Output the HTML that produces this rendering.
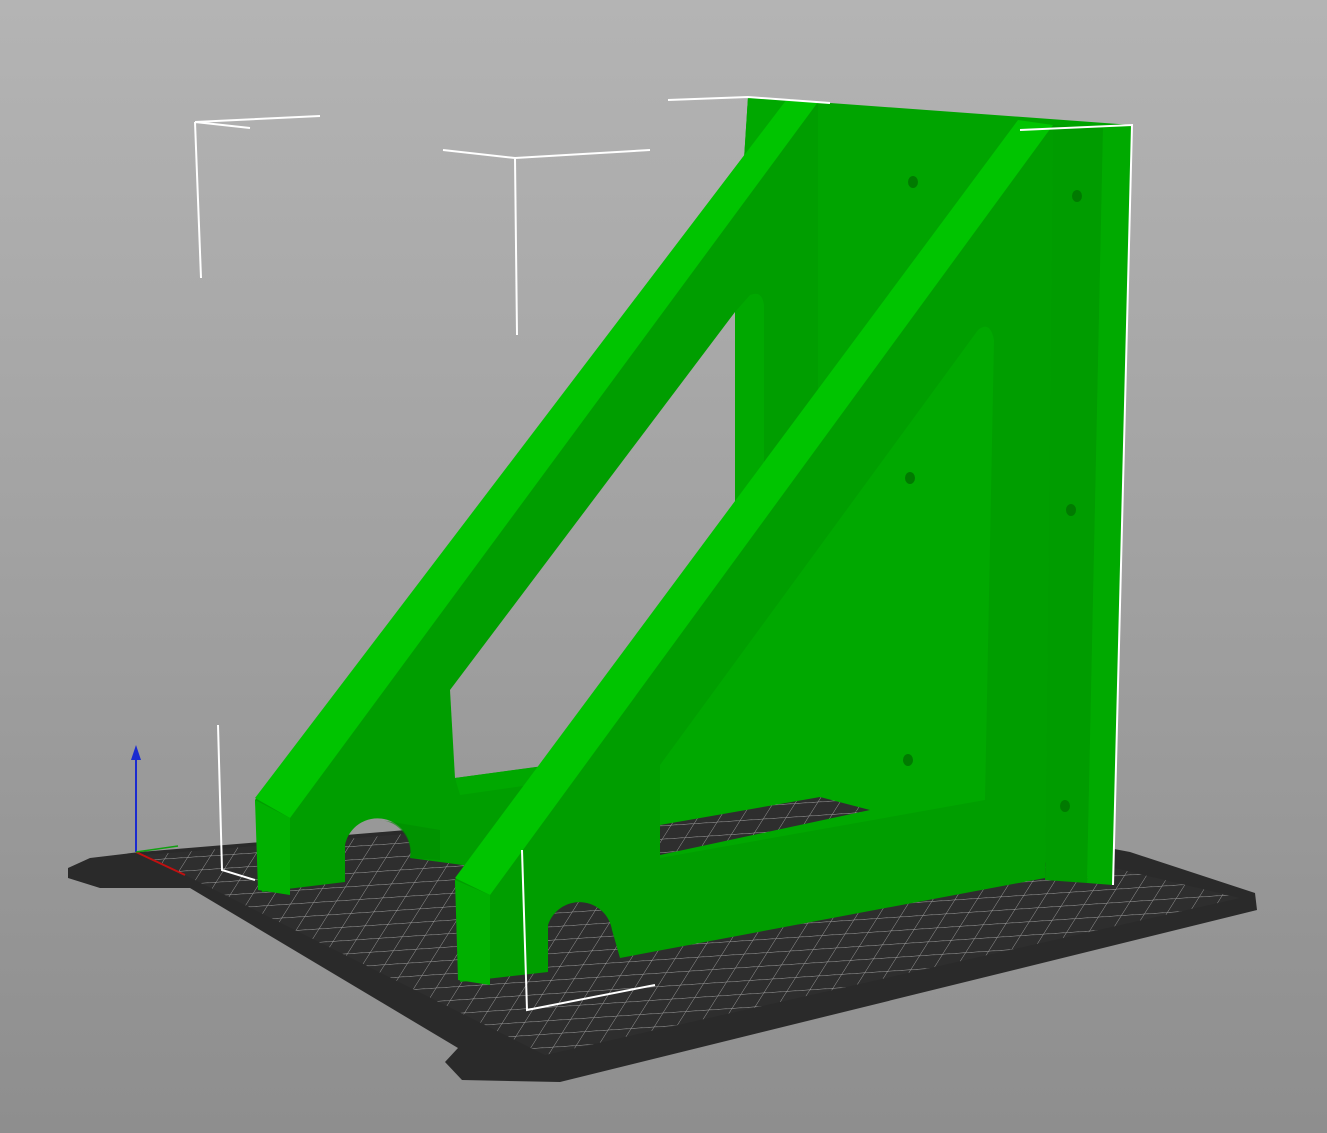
<!DOCTYPE html>
<html><head><style>html,body{margin:0;padding:0;width:1327px;height:1133px;overflow:hidden}</style></head><body>
<svg width="1327" height="1133" viewBox="0 0 1327 1133" xmlns="http://www.w3.org/2000/svg">
<defs><linearGradient id="bg" x1="0" y1="0" x2="0" y2="1133" gradientUnits="userSpaceOnUse"><stop offset="0" stop-color="#b4b4b4"/><stop offset="1" stop-color="#8e8e8e"/></linearGradient>
<pattern id="grid" width="22" height="14" patternUnits="userSpaceOnUse" patternTransform="skewX(-35) rotate(-4)"><rect width="22" height="14" fill="#2e2e2e"/><path d="M0 0H22M0 0V14" stroke="#a0a0a0" stroke-width="1"/></pattern></defs>
<rect width="1327" height="1133" fill="url(#bg)"/>
<!-- bed -->
<path d="M68,868 L90,858 L140,852 L830,795 L1130,852 L1255,893 L1257,910 L560,1082 L462,1080 L445,1062 L458,1048 L190,888 L100,888 L68,878 Z" fill="#2a2a2a"/>
<path d="M145,855 L830,800 L1240,898 L545,1055 Z" fill="url(#grid)"/>
<!-- plate -->
<path d="M748,97 L1132,125 L1113,885 L735,760 L735,300 Z" fill="#00a400"/>
<path d="M748,97 L818,102 L818,560 L735,740 L735,300 Z" fill="#00a800"/>
<path d="M1053,125 L1103,128 L1087,883 L1045,880 Z" fill="#009c00"/>
<path d="M1103,128 L1132,125 L1113,885 L1087,883 Z" fill="#00aa00"/>
<!-- left arm -->
<path d="M255,800 L787,99 L818,102 L818,748 L818,800 L470,866 L440,862 L410,858 A33,33 0 0 0 345,845 L345,882 L262,892 Z" fill="#009e00"/>
<path d="M450,690 L735,312 L735,740 L455,778 Z" fill="url(#bg)"/>
<path d="M735,312 L750,295 Q762,290 764,305 L764,735 L735,740 Z" fill="#00a800"/>
<path d="M455,778 L740,740 L740,755 L460,795 Z" fill="#00a800"/>
<path d="M255,798 L787,99 L818,102 L290,818 Z" fill="#00c400"/>
<path d="M255,800 L290,818 L290,895 L258,890 Z" fill="#00b000"/>
<path d="M380,820 A33,33 0 0 1 410,858 L440,860 L440,830 Z" fill="#008c00" opacity="0.6"/>
<!-- right arm -->
<path d="M455,880 L1018,120 L1053,125 L1045,878 L620,958 L612,930 A33,33 0 0 0 548,925 L548,972 L460,982 Z" fill="#009e00"/>
<path d="M660,765 L978,330 Q990,320 994,340 L985,800 L660,858 Z" fill="#00a800"/>
<path d="M660,825 L820,797 L870,810 L660,855 Z" fill="url(#grid)"/>
<path d="M455,878 L1018,120 L1053,125 L490,895 Z" fill="#00c400"/>
<path d="M455,880 L490,895 L490,985 L458,980 Z" fill="#00b000"/>
<!-- holes -->
<g fill="#007a00"><ellipse cx="913" cy="182" rx="5" ry="6"/><ellipse cx="1077" cy="196" rx="5" ry="6"/><ellipse cx="910" cy="478" rx="5" ry="6"/><ellipse cx="1071" cy="510" rx="5" ry="6"/><ellipse cx="908" cy="760" rx="5" ry="6"/><ellipse cx="1065" cy="806" rx="5" ry="6"/></g>
<!-- bounding box lines -->
<g stroke="#fff" stroke-width="2" fill="none">
<path d="M195,122 L250,128 M195,122 L320,116 M195,122 L201,278"/>
<path d="M443,150 L515,158 L650,150 M515,158 L517,335"/>
<path d="M668,100 L748,97 L830,103"/>
<path d="M1020,130 L1132,125 L1113,885"/>
<path d="M218,725 L222,870 L255,880"/>
<path d="M522,850 L527,1010 L655,985"/>
</g>
<!-- axes -->
<line x1="136" y1="852" x2="136" y2="752" stroke="#1a2bd0" stroke-width="2"/>
<path d="M131,760 L136,745 L141,760 Z" fill="#1a2bd0"/>
<line x1="136" y1="852" x2="185" y2="875" stroke="#c01010" stroke-width="2"/>
<line x1="136" y1="852" x2="178" y2="846" stroke="#10a010" stroke-width="1.5"/>
</svg>
</body></html>
